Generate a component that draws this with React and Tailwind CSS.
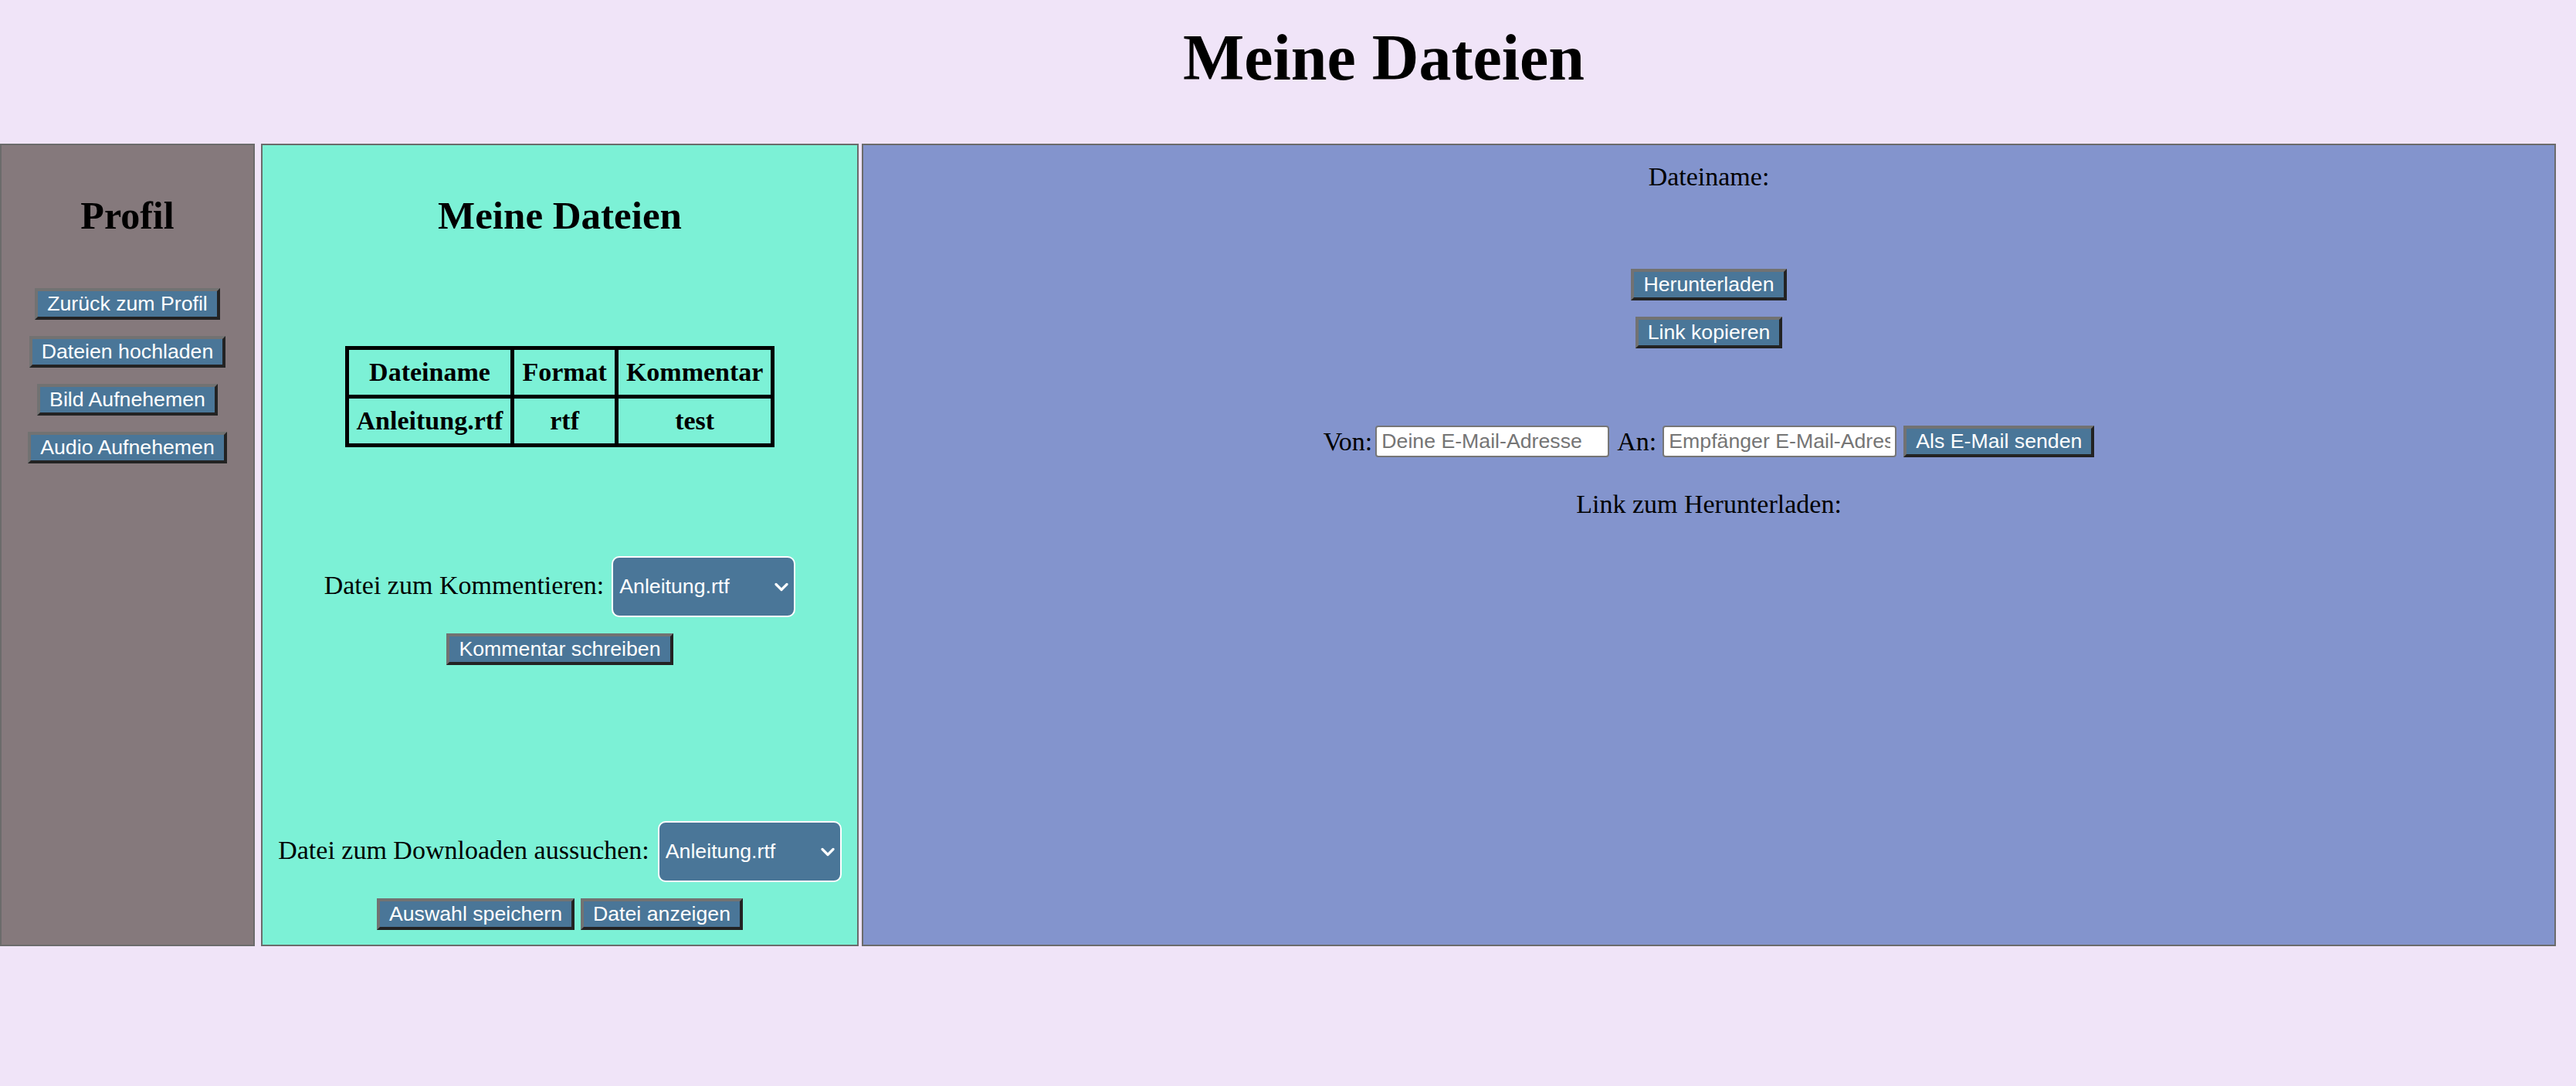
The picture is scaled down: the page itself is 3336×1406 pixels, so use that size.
const Btn = ({ children, className = "" }) => (
  <button
    className={`bg-[#4a7698] text-white font-['Liberation_Sans',Arial,sans-serif] text-[26.7px] leading-[29px] px-[12px] py-[2px] border-[4px] border-t-[#727272] border-l-[#727272] border-b-[#232323] border-r-[#232323] ${className}`}
  >
    {children}
  </button>
);

const Chevron = () => (
  <svg
    className="absolute right-[9px] top-1/2 -translate-y-1/2 pointer-events-none"
    width="18"
    height="12"
    viewBox="0 0 18 12"
    fill="none"
  >
    <path d="M2 2.5 L9 9.5 L16 2.5" stroke="white" strokeWidth="3.2" strokeLinecap="round" strokeLinejoin="round" />
  </svg>
);

const FileSelect = () => (
  <div className="relative">
    <select className="appearance-none w-[238px] h-[79px] rounded-[10px] border-2 border-white bg-[#4a7698] text-white font-['Liberation_Sans',Arial,sans-serif] text-[26.7px] pl-[8px] pr-[30px] outline-none">
      <option>Anleitung.rtf</option>
    </select>
    <Chevron />
  </div>
);

const App = () => {
  const files = [{ name: "Anleitung.rtf", format: "rtf", comment: "test" }];

  return (
    <div className="min-h-[1406px] w-full bg-[#f0e4f8] text-black font-['Liberation_Serif','Times_New_Roman',serif]">
      {/* Header */}
      <div className="h-[186px] pt-[27px] pl-[248px] flex justify-center">
        <h1 className="text-[84px] leading-[96px] font-bold">Meine Dateien</h1>
      </div>

      <div className="flex h-[1039px]">
        {/* Profil */}
        <div className="w-[330px] shrink-0 bg-[#85797c] border-2 border-[#6b6b6b] flex flex-col items-center">
          <h2 className="mt-[62px] text-[50px] leading-[58px] font-bold">Profil</h2>
          <div className="mt-[65px] flex flex-col items-center gap-[21px]">
            <Btn>Zurück zum Profil</Btn>
            <Btn>Dateien hochladen</Btn>
            <Btn>Bild Aufnehemen</Btn>
            <Btn>Audio Aufnehemen</Btn>
          </div>
        </div>

        {/* Meine Dateien */}
        <div className="ml-[8px] w-[774px] shrink-0 bg-[#7cf1d6] border-2 border-[#6b6b6b] flex flex-col items-center">
          <h2 className="mt-[62px] text-[51px] leading-[58px] font-bold">Meine Dateien</h2>

          <table className="mt-[140px] border-collapse text-[34px] font-bold leading-[40px]">
            <thead>
              <tr>
                <th className="border-[5px] border-black px-[10px] py-[9px]">Dateiname</th>
                <th className="border-[5px] border-black px-[10px] py-[9px]">Format</th>
                <th className="border-[5px] border-black px-[10px] py-[9px]">Kommentar</th>
              </tr>
            </thead>
            <tbody>
              {files.map((f) => (
                <tr key={f.name}>
                  <td className="border-[5px] border-black px-[10px] py-[9px] text-center">{f.name}</td>
                  <td className="border-[5px] border-black px-[10px] py-[9px] text-center">{f.format}</td>
                  <td className="border-[5px] border-black px-[10px] py-[9px] text-center">{f.comment}</td>
                </tr>
              ))}
            </tbody>
          </table>

          <div className="mt-[141px] flex items-center">
            <span className="text-[34px] leading-[39px] -mt-[4px]">Datei zum Kommentieren:</span>
            <div className="ml-[10px]">
              <FileSelect />
            </div>
          </div>
          <Btn className="mt-[21px]">Kommentar schreiben</Btn>

          <div className="mt-[202px] flex items-center">
            <span className="text-[34px] leading-[39px] -mt-[4px]">Datei zum Downloaden aussuchen:</span>
            <div className="ml-[11px]">
              <FileSelect />
            </div>
          </div>
          <div className="mt-[21px] flex gap-[8px]">
            <Btn>Auswahl speichern</Btn>
            <Btn>Datei anzeigen</Btn>
          </div>
        </div>

        {/* Datei-Details */}
        <div className="ml-[4px] w-[2194px] shrink-0 bg-[#8394cd] border-2 border-[#6b6b6b] flex flex-col items-center">
          <p className="mt-[21px] text-[34px] leading-[39px]">Dateiname:</p>
          <Btn className="mt-[100px]">Herunterladen</Btn>
          <Btn className="mt-[21px]">Link kopieren</Btn>

          <div className="mt-[100px] flex items-center">
            <span className="text-[34px] leading-[39px]">Von:</span>
            <input
              className="ml-[4px] w-[303px] h-[41px] bg-white border-2 border-[#767676] rounded-[4px] px-[6px] font-['Liberation_Sans',Arial,sans-serif] text-[26.7px] placeholder:text-[#757575] outline-none"
              placeholder="Deine E-Mail-Adresse"
            />
            <span className="ml-[10px] text-[34px] leading-[39px]">An:</span>
            <input
              className="ml-[8px] w-[303px] h-[41px] bg-white border-2 border-[#767676] rounded-[4px] px-[6px] font-['Liberation_Sans',Arial,sans-serif] text-[26.7px] placeholder:text-[#757575] outline-none"
              placeholder="Empfänger E-Mail-Adresse"
            />
            <Btn className="ml-[9px]">Als E-Mail senden</Btn>
          </div>

          <p className="mt-[41px] text-[34px] leading-[39px]">Link zum Herunterladen:</p>
        </div>
      </div>
    </div>
  );
};

export default App;
